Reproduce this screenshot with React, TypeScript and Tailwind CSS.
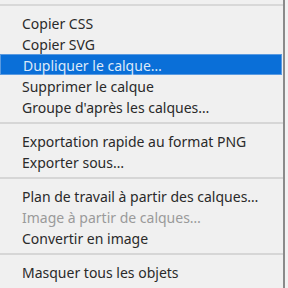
const items: ({ label: string; disabled?: boolean; active?: boolean } | "sep")[] = [
  { label: "Copier CSS" },
  { label: "Copier SVG" },
  { label: "Dupliquer le calque…", active: true },
  { label: "Supprimer le calque" },
  { label: "Groupe d'après les calques…" },
  "sep",
  { label: "Exportation rapide au format PNG" },
  { label: "Exporter sous…" },
  "sep",
  { label: "Plan de travail à partir des calques…" },
  { label: "Image à partir de calques…", disabled: true },
  { label: "Convertir en image" },
  "sep",
  { label: "Masquer tous les objets" },
];

export default function App() {
  return (
    <div className="w-[288px] h-[288px] bg-[#f2f2f2] overflow-hidden flex">
      <div
        className="w-[285px] h-full border-r-2 border-[#8a8a8a] bg-[#f0f0f0] pt-[4px]"
        style={{ fontFamily: '"Noto Sans", sans-serif' }}
      >
        <div className="h-[2px] bg-[#d8d8d8]" />
        <div className="h-[5.5px]" />
        {items.map((item, i) =>
          item === "sep" ? (
            <div key={i} className="h-[13px] flex items-center">
              <div className="w-full h-[2px] bg-[#d6d6d6]" />
            </div>
          ) : (
            <div
              key={i}
              className={
                "h-[21px] flex items-center pt-[3px] pl-[22px] text-[14px] leading-none whitespace-nowrap " +
                (item.active
                  ? "bg-[#0a6fd8] text-[#dce9f8] border border-[#5a9ae0] mr-[1px] pl-[21px]"
                  : item.disabled
                  ? "text-[#9a9a9a]"
                  : "text-[#2a2a2a]")
              }
            >
              {item.label}
            </div>
          )
        )}
      </div>
    </div>
  );
}
